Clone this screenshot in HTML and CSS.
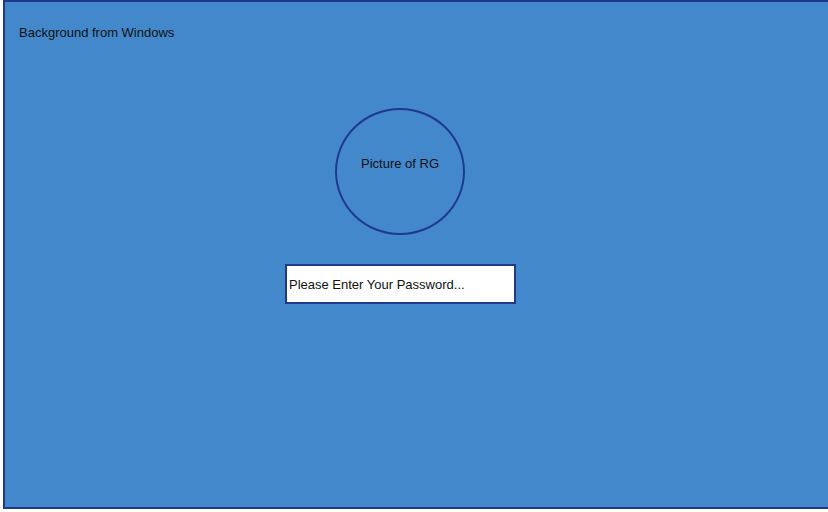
FILE: index.html
```html
<!DOCTYPE html>
<html lang="en">
<head>
<meta charset="utf-8">
<title>Login</title>
<link rel="stylesheet" href="styles.css">
</head>
<body>
<div class="frame">
  <div class="caption">Background from Windows</div>
  <div class="lock">
    <div class="avatar"><span class="avatar-label">Picture of RG</span></div>
    <div class="password">Please Enter Your Password...</div>
  </div>
</div>
</body>
</html>
```
FILE: styles.css
```css
html, body {
  margin: 0;
  padding: 0;
  background: #ffffff;
  overflow: hidden;
  width: 828px;
  height: 512px;
}
body {
  font-family: "Liberation Sans", Arial, sans-serif;
  font-size: 13px;
  line-height: 15px;
  color: #111;
}
.frame {
  margin-left: 3px;
  width: 840px;
  height: 505px;
  border: 2px solid #1f3a8c;
  background: #4488cc;
  box-sizing: content-box;
}
.caption {
  padding: 23px 0 0 14px;
}
.lock {
  margin-left: 280px;
  width: 231px;
  display: flex;
  flex-direction: column;
  align-items: center;
  margin-top: 68px;
  gap: 29px;
}
.avatar {
  width: 130px;
  height: 127px;
  box-sizing: border-box;
  border: 2px solid #1f3a8c;
  border-radius: 50%;
  display: flex;
  justify-content: center;
  padding-top: 46px;
  margin-left: -1px;
}
.password {
  align-self: stretch;
  height: 40px;
  box-sizing: border-box;
  border: 2px solid #1f3a8c;
  background: #fff;
  padding-left: 2px;
  display: flex;
  align-items: center;
  color: #111;
}
```
